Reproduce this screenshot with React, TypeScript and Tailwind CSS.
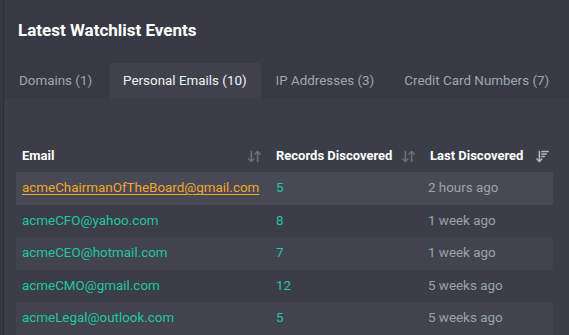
import { ArrowDownUp, ArrowDownWideNarrow } from "lucide-react";

const rows = [
  { email: "acmeChairmanOfTheBoard@gmail.com", records: 5, last: "2 hours ago" },
  { email: "acmeCFO@yahoo.com", records: 8, last: "1 week ago" },
  { email: "acmeCEO@hotmail.com", records: 7, last: "1 week ago" },
  { email: "acmeCMO@gmail.com", records: 12, last: "5 weeks ago" },
  { email: "acmeLegal@outlook.com", records: 5, last: "5 weeks ago" },
];

const tabs = [
  { label: "Domains (1)", active: false },
  { label: "Personal Emails (10)", active: true },
  { label: "IP Addresses (3)", active: false },
  { label: "Credit Card Numbers (7)", active: false },
];

export default function App() {
  return (
    <div
      className="w-[569px] h-[335px] overflow-hidden bg-[#353842] pl-[3px]"
      style={{ fontFamily: "Roboto, 'Liberation Sans', sans-serif" }}
    >
      <div className="h-full border-l border-[#2d2f37] bg-[#3b3e48] flex flex-col">
        {/* Header */}
        <div className="bg-[#373a44]">
          <h2 className="pl-[14px] pt-[19px] h-[63px] text-[17px] font-bold text-white leading-[22px]">
            Latest Watchlist Events
          </h2>
          <div className="flex h-[36px] whitespace-nowrap">
            {tabs.map((t) => (
              <div
                key={t.label}
                className={
                  t.active
                    ? "px-[14px] ml-[2px] flex items-center text-[13.4px] text-[#f2f2f2] bg-[#3f424d] rounded-t-[3px]"
                    : "px-[15px] flex items-center text-[13.4px] text-[#a2a5ad]"
                }
              >
                {t.label}
              </div>
            ))}
          </div>
        </div>

        {/* Table */}
        <div className="ml-[12px] mr-[16px] mt-[41px]">
          <div className="flex h-[32px] items-center text-[13px] font-bold text-white">
            <div className="w-[254px] pl-[6px] pr-[8px] flex items-center justify-between">
              <span>Email</span>
              <ArrowDownUp size={15} strokeWidth={2.5} className="text-[#6c6f79]" />
            </div>
            <div className="w-[154px] pl-[6px] pr-[8px] flex items-center justify-between">
              <span>Records Discovered</span>
              <ArrowDownUp size={15} strokeWidth={2.5} className="text-[#6c6f79]" />
            </div>
            <div className="flex-1 pl-[6px] pr-[3px] flex items-center justify-between">
              <span>Last Discovered</span>
              <ArrowDownWideNarrow size={15} strokeWidth={2.5} className="text-[#b4b7be]" />
            </div>
          </div>
          {rows.map((r, i) => (
            <div
              key={r.email}
              className={
                "flex h-[32.5px] items-center text-[13.4px] " +
                (i === 0 ? "bg-[#474a55]" : i % 2 === 0 ? "bg-[#41444e]" : "")
              }
            >
              <div className="w-[254px] pl-[6px]">
                {i === 0 ? (
                  <span className="text-[#f4a62a] underline underline-offset-2">{r.email}</span>
                ) : (
                  <span className="text-[#1fc6a3]">{r.email}</span>
                )}
              </div>
              <div className="w-[154px] pl-[6px] text-[#1fc6a3]">{r.records}</div>
              <div className="flex-1 pl-[4px] text-[#9ea1a9]">{r.last}</div>
            </div>
          ))}
        </div>
      </div>
    </div>
  );
}
